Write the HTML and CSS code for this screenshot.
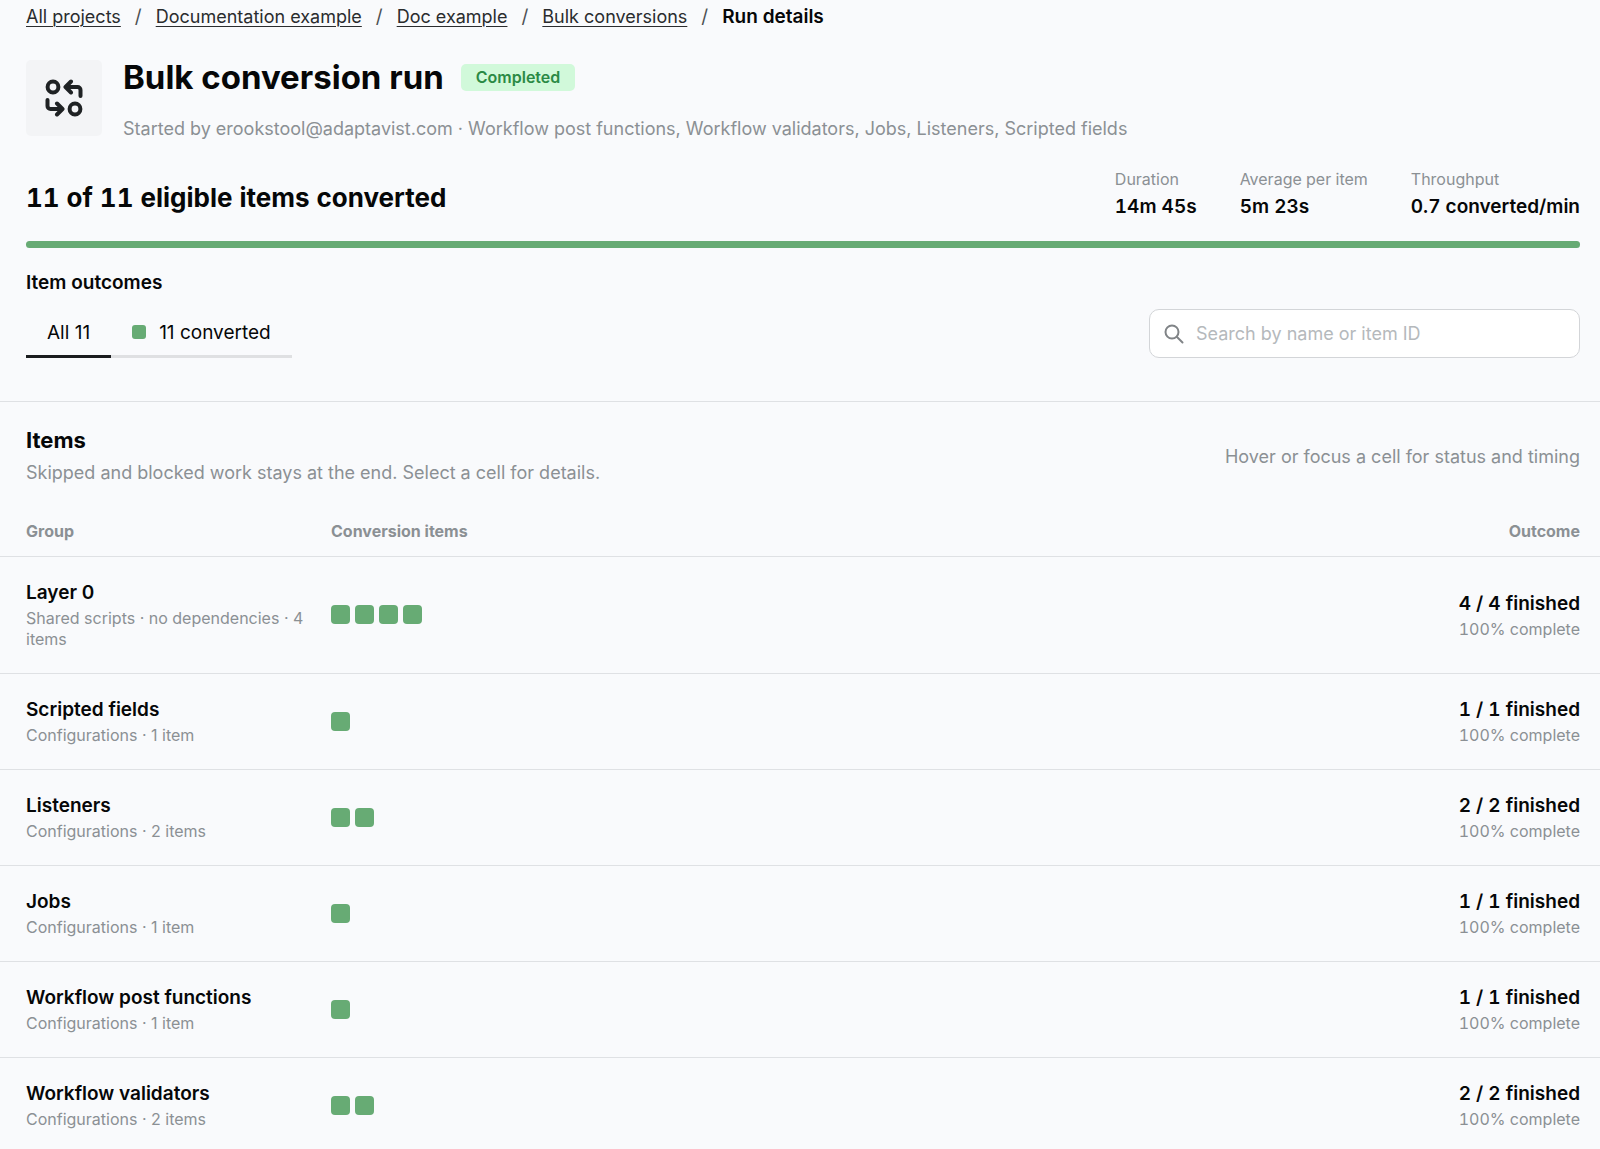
FILE: index.html
```html
<!DOCTYPE html>
<html lang="en">
<head>
<meta charset="utf-8">
<meta name="viewport" content="width=device-width, initial-scale=1">
<title>Bulk conversion run</title>
<link rel="stylesheet" href="styles.css">
</head>
<body>
<main class="page">
  <nav class="breadcrumbs" aria-label="Breadcrumb">
    <ol class="crumb-list">
      <li><a href="#">All projects</a></li>
      <li><a href="#">Documentation example</a></li>
      <li><a href="#">Doc example</a></li>
      <li><a href="#">Bulk conversions</a></li>
      <li aria-current="page">Run details</li>
    </ol>
  </nav>

  <header class="run-header">
    <div class="run-icon">
      <svg viewBox="0 0 38 38" width="38" height="38" fill="none" stroke="currentColor" stroke-width="4" stroke-linecap="round" stroke-linejoin="round" aria-hidden="true">
        <circle cx="8" cy="8" r="5.4"/>
        <circle cx="30" cy="30" r="5.4"/>
        <path d="M26 2.500 20.500 8 26 13.500M21 8h11.500a3 3 0 0 1 3 3v6"/>
        <path d="M12 24.500l5.500 5.500L12 35.500M17 30H5.500a3 3 0 0 1-3-3v-6"/>
      </svg>
    </div>
    <div class="run-heading">
      <div class="title-line">
        <h1>Bulk conversion run</h1>
        <span class="badge">Completed</span>
      </div>
      <p class="muted">Started by erookstool@adaptavist.com · Workflow post functions, Workflow validators, Jobs, Listeners, Scripted fields</p>
    </div>
  </header>

  <section class="summary">
    <h2>11 of 11 eligible items converted</h2>
    <dl class="stats">
      <div><dt>Duration</dt><dd>14m 45s</dd></div>
      <div><dt>Average per item</dt><dd>5m 23s</dd></div>
      <div><dt>Throughput</dt><dd>0.7 converted/min</dd></div>
    </dl>
  </section>
  <div class="progress" role="progressbar" aria-label="Converted items" aria-valuemin="0" aria-valuemax="11" aria-valuenow="11"><div class="progress-fill" style="width: 100%"></div></div>

  <section class="outcomes">
    <h3>Item outcomes</h3>
    <div class="filters">
      <div class="tabs">
        <button type="button" class="tab tab-active" aria-pressed="true">All 11</button>
        <button type="button" class="tab" aria-pressed="false"><span class="swatch"></span>11 converted</button>
      </div>
      <label class="search">
        <svg viewBox="0 0 20 20" width="20" height="20" fill="none" stroke="currentColor" stroke-width="2" stroke-linecap="round" aria-hidden="true"><circle cx="8" cy="8" r="6.500"/><path d="M13 13l5.500 5.500"/></svg>
        <input type="search" placeholder="Search by name or item ID" aria-label="Search by name or item ID">
      </label>
    </div>
  </section>

  <section class="items">
    <div class="items-header">
      <div>
        <h2>Items</h2>
        <p class="muted">Skipped and blocked work stays at the end. Select a cell for details.</p>
      </div>
      <p class="muted">Hover or focus a cell for status and timing</p>
    </div>
    <table>
      <thead>
        <tr><th class="col-group" scope="col">Group</th><th scope="col">Conversion items</th><th class="col-outcome" scope="col">Outcome</th></tr>
      </thead>
      <tbody>
        <tr>
          <td><strong>Layer 0</strong><small>Shared scripts · no dependencies · 4 items</small></td>
          <td><div class="cells"><button type="button" class="cell" aria-label="Item 1"></button><button type="button" class="cell" aria-label="Item 2"></button><button type="button" class="cell" aria-label="Item 3"></button><button type="button" class="cell" aria-label="Item 4"></button></div></td>
          <td class="col-outcome"><strong>4 / 4 finished</strong><small>100% complete</small></td>
        </tr>
        <tr>
          <td><strong>Scripted fields</strong><small>Configurations · 1 item</small></td>
          <td><div class="cells"><button type="button" class="cell" aria-label="Item 1"></button></div></td>
          <td class="col-outcome"><strong>1 / 1 finished</strong><small>100% complete</small></td>
        </tr>
        <tr>
          <td><strong>Listeners</strong><small>Configurations · 2 items</small></td>
          <td><div class="cells"><button type="button" class="cell" aria-label="Item 1"></button><button type="button" class="cell" aria-label="Item 2"></button></div></td>
          <td class="col-outcome"><strong>2 / 2 finished</strong><small>100% complete</small></td>
        </tr>
        <tr>
          <td><strong>Jobs</strong><small>Configurations · 1 item</small></td>
          <td><div class="cells"><button type="button" class="cell" aria-label="Item 1"></button></div></td>
          <td class="col-outcome"><strong>1 / 1 finished</strong><small>100% complete</small></td>
        </tr>
        <tr>
          <td><strong>Workflow post functions</strong><small>Configurations · 1 item</small></td>
          <td><div class="cells"><button type="button" class="cell" aria-label="Item 1"></button></div></td>
          <td class="col-outcome"><strong>1 / 1 finished</strong><small>100% complete</small></td>
        </tr>
        <tr>
          <td><strong>Workflow validators</strong><small>Configurations · 2 items</small></td>
          <td><div class="cells"><button type="button" class="cell" aria-label="Item 1"></button><button type="button" class="cell" aria-label="Item 2"></button></div></td>
          <td class="col-outcome"><strong>2 / 2 finished</strong><small>100% complete</small></td>
        </tr>
      </tbody>
    </table>
  </section>
</main>
</body>
</html>
```
FILE: styles.css
```css
:root {
  --bg: #f9fafc;
  --text: #060708;
  --muted: #8b9094;
  --line: #dfe1e4;
  --green: #67ab74;
}

* { box-sizing: border-box; }

body {
  margin: 0;
  background: var(--bg);
  color: var(--text);
  font-family: Inter, "Liberation Sans", sans-serif;
  font-size: 19px;
  line-height: 27px;
}

h1, h2, h3, p, dl, dd, ol { margin: 0; padding: 0; }
h1, h2 { font-weight: 700; }
h3 { font-weight: 600; }
button, input { font: inherit; color: inherit; }

.muted { color: var(--muted); font-size: 18px; }

.breadcrumbs { padding: 3px 26px 0; }
.crumb-list { display: flex; flex-wrap: wrap; list-style: none; }
.crumb-list a {
  color: #2a2c2e;
  font-size: 18px;
  text-decoration-thickness: 1px;
  text-underline-offset: 3px;
}
.crumb-list li + li::before { content: "/"; margin: 0 14px; font-weight: 400; color: #4d5053; }
.crumb-list [aria-current] { font-weight: 600; }

.run-header {
  display: flex;
  align-items: center;
  gap: 21px;
  padding: 24px 20px 0 26px;
}
.run-icon {
  display: flex;
  flex: none;
  align-items: center;
  justify-content: center;
  width: 76px;
  height: 76px;
  border-radius: 5px;
  background: #f3f4f6;
  color: #1f2224;
}
.run-heading { display: flex; flex-direction: column; gap: 15px; }
.title-line { display: flex; align-items: center; gap: 17px; }
h1 { font-size: 33px; line-height: 46px; }
.badge {
  padding: 3px 15px;
  border-radius: 5px;
  background: #d1f9da;
  color: #2b8a45;
  font-size: 16px;
  line-height: 21px;
  font-weight: 600;
}

.summary {
  display: flex;
  align-items: flex-end;
  justify-content: space-between;
  padding: 24px 20px 0 26px;
}
.summary h2 { font-size: 26px; line-height: 44px; font-variant-numeric: tabular-nums; }
.stats { display: flex; gap: 43px; font-variant-numeric: tabular-nums; }
.stats dt { color: var(--muted); font-size: 16px; line-height: 27px; }
.stats dd { font-weight: 600; }

.progress { height: 7px; margin: 21px 20px 0 26px; border-radius: 4px; background: var(--line); }
.progress-fill { height: 100%; border-radius: 4px; background: var(--green); }

.outcomes { padding: 21px 20px 43px 26px; }
.outcomes h3 { font-size: 19px; line-height: 27px; }
.filters { display: flex; align-items: flex-end; justify-content: space-between; padding-top: 13px; }
.tabs { display: flex; }
.tab {
  display: flex;
  align-items: center;
  gap: 13px;
  height: 49px;
  padding: 0 21px;
  border: 0;
  border-bottom: 3px solid #dfe0e2;
  background: none;
}
.tab-active { border-color: #1a1c1e; }
.swatch { width: 14px; height: 14px; border-radius: 3px; background: var(--green); }
.search {
  display: flex;
  align-items: center;
  gap: 12px;
  width: 431px;
  height: 49px;
  padding: 0 14px;
  border: 1px solid #d3d5d8;
  border-radius: 10px;
  background: #fff;
  color: #808487;
}
.search svg { flex: none; }
.search input { flex: 1; min-width: 0; padding: 0; border: 0; outline: 0; background: none; color: var(--text); font-size: 18px; }
.search input::placeholder { color: #b5b9bc; opacity: 1; }

.items { border-top: 1px solid var(--line); }
.items-header {
  display: flex;
  align-items: center;
  justify-content: space-between;
  padding: 23px 20px 22px 26px;
}
.items h2 { margin-bottom: 2px; font-size: 22px; line-height: 30px; }
.items-header p { line-height: 32px; }

table { width: 100%; border-collapse: separate; border-spacing: 0; table-layout: fixed; }
th, td { text-align: left; border-bottom: 1px solid var(--line); }
th { padding: 10px 0 14px; color: var(--muted); font-size: 16px; line-height: 21px; font-weight: 700; }
td { padding: 22px 0 23px; vertical-align: middle; }
th:first-child, td:first-child { padding-left: 26px; padding-right: 24px; }
.col-group { width: 331px; }
th.col-outcome, td.col-outcome { width: 220px; padding-right: 20px; text-align: right; font-variant-numeric: tabular-nums; }
strong { display: block; font-weight: 600; }
small { display: block; margin-top: 2px; color: var(--muted); font-size: 16px; line-height: 21px; }
.cells { display: flex; gap: 5px; }
.cell { width: 19px; height: 19px; padding: 0; border: 0; border-radius: 4px; background: var(--green); }
```
